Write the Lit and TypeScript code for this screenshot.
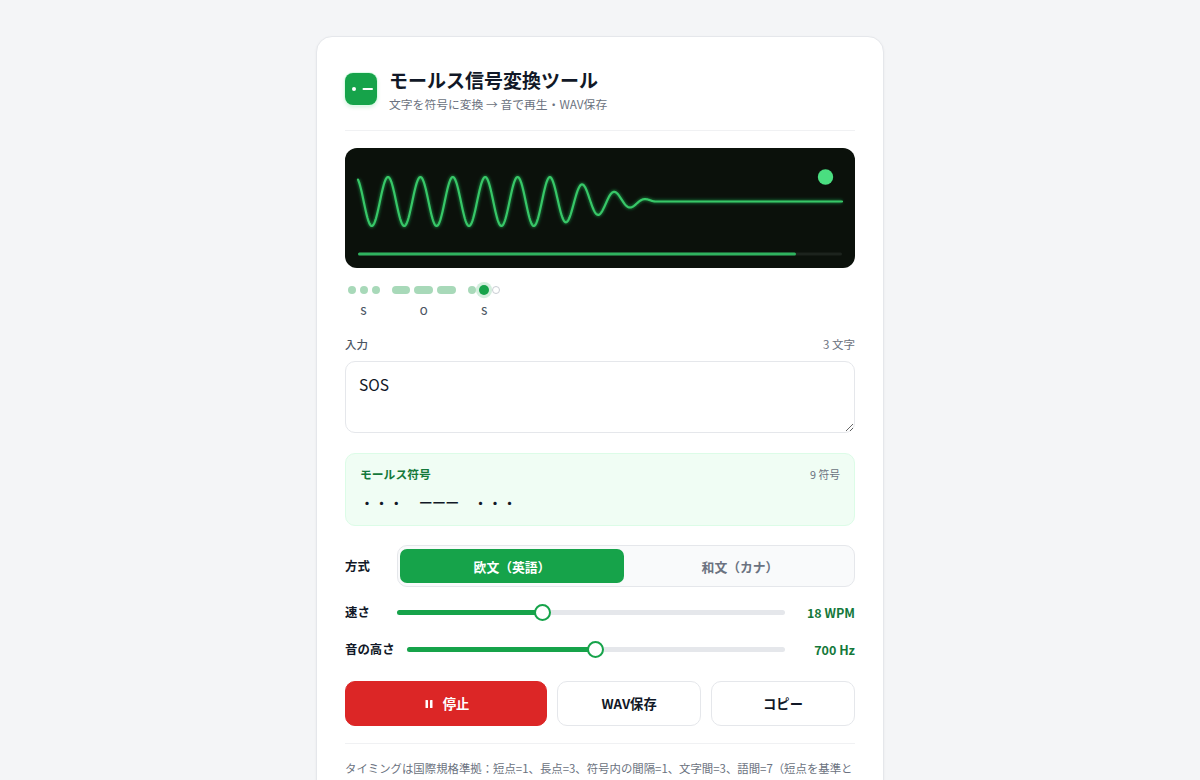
import { LitElement, html, css, svg } from "lit";
import { customElement } from "lit/decorators.js";

const WAVE_LEFT = 13;
const WAVE_RIGHT = 497;
const CENTER = 53.5;

function wavePoints(): string {
  const pts: string[] = [];
  for (let x = WAVE_LEFT; x <= WAVE_RIGHT; x += 0.5) {
    const abs = x + 345;
    const amp = abs < 550 ? 24.5 : Math.max(0, 24.5 - (abs - 550) * 0.23);
    const y = CENTER - amp * Math.sin((2 * Math.PI * (abs - 379.9)) / 32.4);
    pts.push(`${x},${y.toFixed(2)}`);
  }
  return pts.join(" ");
}

type Sym = { w: "dot" | "dash"; s: "done" | "active" | "todo" };
const groups: { label: string; syms: Sym[] }[] = [
  { label: "S", syms: [{ w: "dot", s: "done" }, { w: "dot", s: "done" }, { w: "dot", s: "done" }] },
  { label: "O", syms: [{ w: "dash", s: "done" }, { w: "dash", s: "done" }, { w: "dash", s: "done" }] },
  { label: "S", syms: [{ w: "dot", s: "done" }, { w: "dot", s: "active" }, { w: "dot", s: "todo" }] },
];

@customElement("app-root")
export class AppRoot extends LitElement {
  static styles = css`
    :host {
      display: block;
      min-height: 780px;
      background: #f4f5f7;
      font-family: "Noto Sans CJK JP", "Noto Sans", sans-serif;
      color: #111827;
      box-sizing: border-box;
      padding: 36px 0 40px;
    }
    * { box-sizing: border-box; }
    .card {
      width: 568px;
      margin: 0 auto;
      background: #fff;
      border: 1px solid #e5e7eb;
      border-radius: 16px;
      box-shadow: 0 1px 3px rgba(0,0,0,.05);
      padding: 28px 28px 28px;
    }
    .head {
      display: flex;
      align-items: center;
      gap: 12px;
      padding-bottom: 17px;
      border-bottom: 1px solid #f0f1f3;
    }
    .logo {
      width: 32px;
      height: 32px;
      border-radius: 8px;
      background: #16a34a;
      box-shadow: 0 0 0 1px #dcfce7, 0 2px 4px rgba(22,163,74,.2);
      display: flex;
      align-items: center;
      justify-content: center;
      flex: none;
    }
    h1 {
      margin: 0;
      font-size: 19px;
      font-weight: 700;
      line-height: 30px;
      color: #111827;
    }
    .sub {
      font-size: 11.8px;
      line-height: 18px;
      color: #6b7280;
    }
    .scope {
      display: block;
      margin-top: 17px;
      width: 510px;
      height: 120px;
      border-radius: 12px;
      overflow: hidden;
      background: #0b110b;
    }
    .timeline {
      display: flex;
      gap: 12.3px;
      padding-left: 2.5px;
      margin-top: 18px;
    }
    .group {
      display: flex;
      flex-direction: column;
      align-items: center;
      gap: 9px;
    }
    .syms { display: flex; gap: 4px; }
    .sym { height: 8px; border-radius: 4px; background: #a8d9b9; }
    .sym.dot { width: 8px; }
    .sym.dash { width: 18.7px; }
    .sym.active {
      background: #16a34a;
      box-shadow: 0 0 0 2.5px #d3eedd;
      transform: scale(1.25);
    }
    .sym.todo { background: #fff; border: 1px solid #c9cdd3; }
    .letter {
      font-size: 10.5px;
      font-weight: 500;
      line-height: 15px;
      color: #4b5563;
    }
    .label-row {
      display: flex;
      justify-content: space-between;
      align-items: center;
      margin-top: 18px;
      font-size: 11.5px;
      line-height: 17px;
      color: #6b7280;
    }
    .input-label { font-weight: 500; color: #4b5563; }
    textarea {
      display: block;
      width: 100%;
      height: 72px;
      margin-top: 8px;
      padding: 11px 13px;
      border: 1px solid #e5e7eb;
      border-radius: 10px;
      font: 400 15.5px/1.5 "Noto Sans CJK JP", "Noto Sans", sans-serif;
      color: #111827;
      background: #fff;
      outline: none;
      resize: vertical;
    }
    .output {
      margin-top: 20px;
      height: 73px;
      padding: 11px 14px;
      background: #f0fdf4;
      border: 1px solid #dcfce7;
      border-radius: 10px;
    }
    .out-head {
      display: flex;
      justify-content: space-between;
      align-items: baseline;
      font-size: 10.8px;
      line-height: 17px;
      color: #6b7280;
    }
    .out-title { font-size: 11.8px; font-weight: 700; color: #14783a; }
    .code {
      display: flex;
      gap: 15px;
      margin-top: 8px;
      font-size: 14px;
      font-weight: 500;
      line-height: 22px;
      color: #111827;
      white-space: pre;
    }
    .dots { letter-spacing: .6px; }
    .bars { letter-spacing: -.8px; }
    .row {
      display: flex;
      align-items: center;
      gap: 12px;
      font-size: 12.4px;
      font-weight: 700;
      color: #111827;
    }
    .row-label { min-width: 40px; white-space: nowrap; }
    .mode { margin-top: 19px; }
    .toggle {
      flex: 1;
      display: grid;
      grid-template-columns: 1fr 1fr;
      gap: 4px;
      height: 42px;
      padding: 3px 2px;
      background: #f9fafb;
      border: 1px solid #e5e7eb;
      border-radius: 10px;
    }
    .toggle button {
      border: 0;
      border-radius: 7px;
      background: transparent;
      font: 700 12.8px "Noto Sans CJK JP", "Noto Sans", sans-serif;
      color: #6b7280;
      padding: 0;
    }
    .toggle button.on { background: #16a34a; color: #fff; }
    .speed { margin-top: 15px; height: 20px; }
    .pitch { margin-top: 17px; height: 20px; }
    .track {
      position: relative;
      flex: 1;
      height: 5px;
      border-radius: 3px;
      background: #e5e7eb;
    }
    .fill {
      height: 100%;
      border-radius: 3px;
      background: #16a34a;
    }
    .thumb {
      position: absolute;
      top: 50%;
      width: 17px;
      height: 17px;
      margin: -8.5px 0 0 -8.5px;
      border-radius: 50%;
      background: #fff;
      border: 2.5px solid #16a34a;
    }
    .val {
      min-width: 58px;
      text-align: right;
      color: #14783a;
      font-size: 12.5px;
      font-weight: 700;
      white-space: nowrap;
    }
    .actions {
      display: flex;
      gap: 10px;
      margin-top: 22px;
    }
    .btn {
      flex: 1;
      height: 45px;
      border-radius: 10px;
      border: 1px solid #e5e7eb;
      background: #fff;
      font: 700 13.3px "Noto Sans CJK JP", "Noto Sans", sans-serif;
      color: #111827;
      display: flex;
      align-items: center;
      justify-content: center;
      gap: 10px;
      padding: 0;
    }
    .btn.stop {
      flex: 1.41;
      background: #dc2626;
      border-color: #dc2626;
      color: #fff;
    }
    .note {
      margin: 17px 0 0;
      padding-top: 14px;
      border-top: 1px solid #f0f1f3;
      font-size: 11.4px;
      line-height: 20px;
      color: #6b7280;
    }
  `;

  private scope() {
    return svg`
      <svg class="scope" viewBox="0 0 510 120" xmlns="http://www.w3.org/2000/svg">
        <defs>
          <filter id="glow" x="-5%" y="-20%" width="110%" height="140%">
            <feGaussianBlur stdDeviation="1.5" />
          </filter>
        </defs>
        <polyline points=${wavePoints()} fill="none" stroke="#22c55e" stroke-opacity=".5" stroke-width="3.5" filter="url(#glow)" />
        <polyline points=${wavePoints()} fill="none" stroke="#38c768" stroke-width="2.2" stroke-linecap="round" stroke-linejoin="round" />
        <circle cx="480.5" cy="29" r="7.7" fill="#4ade80" />
        <rect x="13" y="104.5" width="484" height="3" rx="1.5" fill="#1c231d" />
        <rect x="13" y="104.5" width="438" height="3" rx="1.5" fill="#2fb35f" />
      </svg>`;
  }

  private slider(label: string, pct: number, val: string, cls: string) {
    return html`
      <div class="row ${cls}">
        <span class="row-label">${label}</span>
        <div class="track">
          <div class="fill" style="width:${pct}%"></div>
          <div class="thumb" style="left:${pct}%"></div>
        </div>
        <span class="val">${val}</span>
      </div>`;
  }

  render() {
    return html`
      <div class="card">
        <header class="head">
          <div class="logo">
            <svg width="24" height="8" viewBox="0 0 24 8">
              <circle cx="5" cy="4" r="2" fill="#fff" />
              <rect x="13.5" y="3" width="10.5" height="2" rx="1" fill="#fff" />
            </svg>
          </div>
          <div>
            <h1>モールス信号変換ツール</h1>
            <div class="sub">文字を符号に変換 → 音で再生・WAV保存</div>
          </div>
        </header>
        ${this.scope()}
        <div class="timeline">
          ${groups.map(
            (g) => html`
              <div class="group">
                <div class="syms">
                  ${g.syms.map((s) => html`<span class="sym ${s.w} ${s.s}"></span>`)}
                </div>
                <span class="letter">${g.label}</span>
              </div>`
          )}
        </div>
        <div class="label-row">
          <span class="input-label">入力</span>
          <span>3 文字</span>
        </div>
        <textarea .value=${"SOS"}></textarea>
        <section class="output">
          <div class="out-head">
            <span class="out-title">モールス符号</span>
            <span>9 符号</span>
          </div>
          <div class="code">
            <span class="dots">・・・</span>
            <span class="bars">ーーー</span>
            <span class="dots">・・・</span>
          </div>
        </section>
        <div class="row mode">
          <span class="row-label">方式</span>
          <div class="toggle">
            <button class="on">欧文（英語）</button>
            <button>和文（カナ）</button>
          </div>
        </div>
        ${this.slider("速さ", 37.5, "18 WPM", "speed")}
        ${this.slider("音の高さ", 50, "700 Hz", "pitch")}
        <div class="actions">
          <button class="btn stop">
            <svg width="10" height="10" viewBox="0 0 10 10">
              <rect x="2.5" y="1" width="2.5" height="8" rx=".5" fill="#fff" />
              <rect x="7" y="1" width="2.5" height="8" rx=".5" fill="#fff" />
            </svg>
            停止
          </button>
          <button class="btn">WAV保存</button>
          <button class="btn">コピー</button>
        </div>
        <p class="note">
          タイミングは国際規格準拠：短点=1、長点=3、符号内の間隔=1、文字間=3、語間=7（短点を基準として計算）
        </p>
      </div>
    `;
  }
}
